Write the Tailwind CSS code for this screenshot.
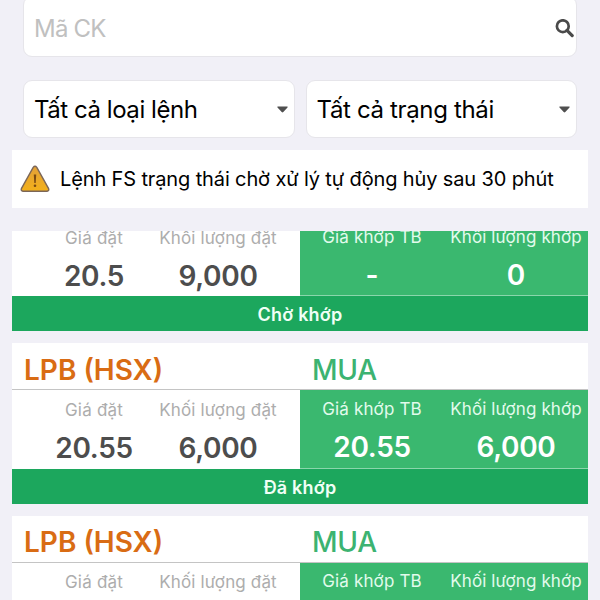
<!DOCTYPE html>
<html lang="vi">
<head>
    <meta charset="UTF-8">
    <meta name="viewport" content="width=device-width, initial-scale=1.0">
    <title>Sổ lệnh</title>
    <script src="https://cdn.jsdelivr.net/npm/@tailwindcss/browser@4"></script>
</head>
<body class="h-[600px] overflow-hidden bg-[#f1f0f7] font-['Inter','Liberation_Sans',sans-serif] text-black">

    <div class="flex h-[600px] flex-col px-3">

        <!-- Search -->
        <div class="mx-[11px] -mt-1 flex h-[61px] shrink-0 items-center justify-between rounded-[9px] border border-[#e6e5ea] bg-white pl-2.5 pt-[3px]">
            <span class="pt-0.5 text-[24px] leading-8 tracking-[-0.8px] text-[#c0c0c0]">Mã CK</span>
            <svg class="mr-0.5 h-[19px] w-[19px]" viewBox="0 0 19 19" fill="none" stroke="#4a4a4a">
                <circle cx="7.8" cy="7.2" r="5.9" stroke-width="2.7"></circle>
                <path d="M12 11.4L17.2 16.6" stroke-width="3.2" stroke-linecap="round"></path>
            </svg>
        </div>

        <!-- Filters -->
        <div class="mx-[11px] mt-[23px] grid shrink-0 grid-cols-2 gap-[11px]">
            <div class="flex h-[58px] items-center justify-between rounded-[9px] border border-[#e6e5ea] bg-white pl-2.5 pr-1.5">
                <span class="pt-0.5 text-[24px] leading-8 tracking-[-0.45px]">Tất cả loại lệnh</span>
                <svg class="h-[7px] w-[11px]" viewBox="0 0 11 7" fill="#4f4f4f"><path d="M.8.4h9.4q.9.2.3 1L6.3 6q-.8.8-1.6 0L.5 1.4q-.6-.8.3-1z"></path></svg>
            </div>
            <div class="flex h-[58px] items-center justify-between rounded-[9px] border border-[#e6e5ea] bg-white pl-2.5 pr-1.5">
                <span class="pt-0.5 text-[24px] leading-8 tracking-[-0.35px]">Tất cả trạng thái</span>
                <svg class="h-[7px] w-[11px]" viewBox="0 0 11 7" fill="#4f4f4f"><path d="M.8.4h9.4q.9.2.3 1L6.3 6q-.8.8-1.6 0L.5 1.4q-.6-.8.3-1z"></path></svg>
            </div>
        </div>

        <!-- Notice -->
        <div class="mt-3 flex h-[58px] shrink-0 items-center bg-white pl-2">
            <svg class="h-7 w-[30px]" viewBox="0 0 30 28">
                <defs>
                    <linearGradient id="warn" x1="0" y1="0" x2="0" y2="1">
                        <stop offset="0" stop-color="#e2a13a"></stop>
                        <stop offset="1" stop-color="#f3b019"></stop>
                    </linearGradient>
                </defs>
                <path d="M13.2 2.4q1.8-2.4 3.6 0L28.6 23.6q.8 2.4-1.6 2.7H3q-2.4-.3-1.6-2.7z" fill="url(#warn)" stroke="#7b6658" stroke-width="1.4"></path>
                <path d="M13.8 9.5h2.4l-.5 8.5h-1.4z" fill="#7a4a12"></path>
                <circle cx="15" cy="20.8" r="1.3" fill="#7a4a12"></circle>
            </svg>
            <span class="ml-2.5 text-[20px] leading-7 tracking-[-0.13px]">Lệnh FS trạng thái chờ xử lý tự động hủy sau 30 phút</span>
        </div>

        <!-- Order list -->
        <div class="mt-[23px] flex min-h-0 flex-1 flex-col gap-3 overflow-hidden">

            <!-- Scrolled past its header -->
            <div class="-mt-3.5 shrink-0 bg-white">
                <div class="grid h-[79px] grid-cols-2 text-center">
                    <div class="grid grid-cols-2 grid-rows-[30px_40px] px-5 pt-[9px]">
                        <div class="text-[17px] leading-6 tracking-[0.2px] text-[#adadad]">Giá đặt</div>
                        <div class="-mx-2 text-[17px] leading-6 tracking-[0.15px] text-[#adadad]">Khối lượng đặt</div>
                        <div class="text-[28px] font-semibold leading-10 tracking-[-0.3px] text-[#4d4d4d]">20.5</div>
                        <div class="text-[28px] font-semibold leading-10 tracking-[-0.3px] text-[#4d4d4d]">9,000</div>
                    </div>
                    <div class="grid grid-cols-2 grid-rows-[30px_40px] border-b border-[#8ad6ab] bg-[#3ab86f] pt-2 text-white">
                        <div class="text-[17px] leading-6 tracking-[0.15px] text-[#e2fbec]">Giá khớp TB</div>
                        <div class="text-[17px] leading-6 tracking-[0.1px] text-[#e2fbec]">Khối lượng khớp</div>
                        <div class="text-[28px] font-semibold leading-10">-</div>
                        <div class="text-[28px] font-semibold leading-10">0</div>
                    </div>
                </div>
                <div class="h-[35px] bg-[#1ca75d] text-center text-[18px] font-semibold leading-[37px] tracking-[0.2px] text-[#f0fff6]">Chờ khớp</div>
            </div>

            <div class="shrink-0 bg-white">
                <div class="grid h-[47px] grid-cols-2 border-b border-[#c4c4c4] text-[28px] leading-[54px]">
                    <span class="pl-3 font-[560] text-[#d96c14]">LPB (HSX)</span>
                    <span class="pl-3 font-medium tracking-[-0.2px] text-[#3cb371]">MUA</span>
                </div>
                <div class="grid h-[79px] grid-cols-2 text-center">
                    <div class="grid grid-cols-2 grid-rows-[30px_40px] px-5 pt-2">
                        <div class="text-[17px] leading-6 tracking-[0.2px] text-[#adadad]">Giá đặt</div>
                        <div class="-mx-2 text-[17px] leading-6 tracking-[0.15px] text-[#adadad]">Khối lượng đặt</div>
                        <div class="text-[28px] font-semibold leading-10 tracking-[-0.3px] text-[#4d4d4d]">20.55</div>
                        <div class="text-[28px] font-semibold leading-10 tracking-[-0.3px] text-[#4d4d4d]">6,000</div>
                    </div>
                    <div class="grid grid-cols-2 grid-rows-[30px_40px] border-b border-[#8ad6ab] bg-[#3ab86f] pt-[7px] text-white">
                        <div class="text-[17px] leading-6 tracking-[0.15px] text-[#e2fbec]">Giá khớp TB</div>
                        <div class="text-[17px] leading-6 tracking-[0.1px] text-[#e2fbec]">Khối lượng khớp</div>
                        <div class="text-[28px] font-semibold leading-10 tracking-[-0.3px]">20.55</div>
                        <div class="text-[28px] font-semibold leading-10 tracking-[-0.3px]">6,000</div>
                    </div>
                </div>
                <div class="h-[35px] bg-[#1ca75d] text-center text-[18px] font-semibold leading-[37px] tracking-[0.2px] text-[#f0fff6]">Đã khớp</div>
            </div>

            <div class="shrink-0 bg-white">
                <div class="grid h-[47px] grid-cols-2 border-b border-[#c4c4c4] text-[28px] leading-[53px]">
                    <span class="pl-3 font-[560] text-[#d96c14]">LPB (HSX)</span>
                    <span class="pl-3 font-medium tracking-[-0.2px] text-[#3cb371]">MUA</span>
                </div>
                <div class="grid h-[37px] grid-cols-2 text-center">
                    <div class="grid grid-cols-2 px-5 pt-[7px]">
                        <div class="text-[17px] leading-6 tracking-[0.2px] text-[#adadad]">Giá đặt</div>
                        <div class="-mx-2 text-[17px] leading-6 tracking-[0.15px] text-[#adadad]">Khối lượng đặt</div>
                    </div>
                    <div class="grid grid-cols-2 bg-[#3ab86f] pt-1.5 text-white">
                        <div class="text-[17px] leading-6 tracking-[0.15px] text-[#e2fbec]">Giá khớp TB</div>
                        <div class="text-[17px] leading-6 tracking-[0.1px] text-[#e2fbec]">Khối lượng khớp</div>
                    </div>
                </div>
            </div>

        </div>
    </div>

</body>
</html>
